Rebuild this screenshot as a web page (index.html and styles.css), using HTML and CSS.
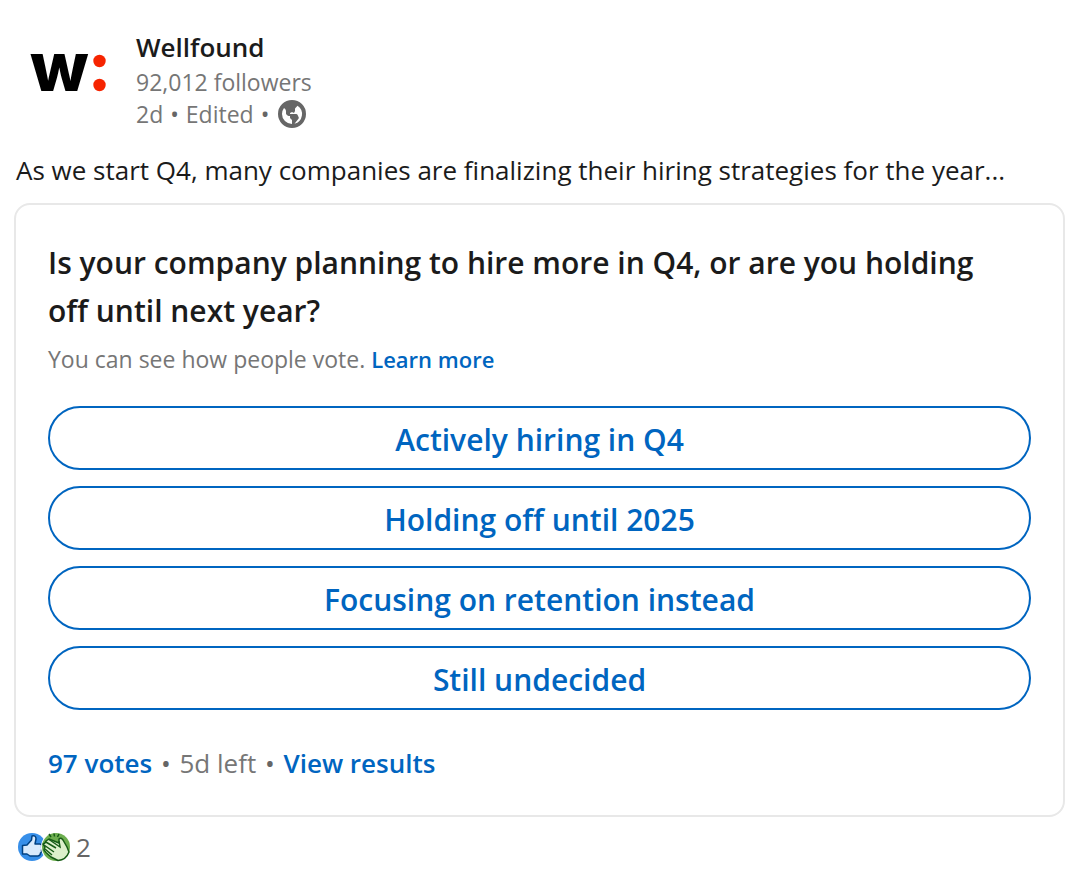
FILE: index.html
```html
<!DOCTYPE html>
<html lang="en">
<head>
<meta charset="utf-8">
<meta name="viewport" content="width=device-width, initial-scale=1">
<title>Wellfound poll</title>
<link rel="stylesheet" href="styles.css">
</head>
<body>
<article class="post">
  <header class="author">
    <svg class="logo" viewBox="0 0 96 96" role="img" aria-label="Wellfound logo">
      <text class="logo-letter" x="14" y="67">w</text>
      <circle cx="83.500" cy="37" r="6.200" fill="#f62400"/>
      <circle cx="83.500" cy="61" r="6.200" fill="#f62400"/>
    </svg>
    <div class="author-info">
      <h1 class="name">Wellfound</h1>
      <p class="meta">92,012 followers</p>
      <p class="meta meta-row"><span>2d <span class="dot">•</span> Edited <span class="dot">•</span></span>
        <svg class="globe" viewBox="1 1 14 14" aria-hidden="true">
          <path fill="#666" d="M8 1a7 7 0 107 7 7 7 0 00-7-7zM3 8a5 5 0 011-3l.55.55A1.5 1.5 0 015 6.620v1.070a.75.75 0 00.22.53l.56.56a.75.75 0 00.53.22H7v.69a.75.75 0 00.22.53l.56.56a.75.75 0 01.22.53V13a5 5 0 01-5-5zm6.240 4.830l2-2.460a.75.75 0 00.09-.8l-.58-1.160A.76.76 0 0010 8H7v-.19a.51.51 0 01.28-.45l.38-.19a.74.74 0 01.68 0L9 7.500l.38-.7a1 1 0 00.12-.48v-.85a.78.78 0 01.21-.53l1.070-1.090a5 5 0 01-1.540 9z"/>
        </svg>
      </p>
    </div>
  </header>
  <p class="body-text">As we start Q4, many companies are finalizing their hiring strategies for the year...</p>
  <section class="poll">
    <h2 class="question">Is your company planning to hire more in Q4, or are you holding off until next year?</h2>
    <p class="hint">You can see how people vote. <a href="#learn">Learn more</a></p>
    <div class="options">
      <button class="option" type="button">Actively hiring in Q4</button>
      <button class="option" type="button">Holding off until 2025</button>
      <button class="option" type="button">Focusing on retention instead</button>
      <button class="option" type="button">Still undecided</button>
    </div>
    <p class="stats"><a href="#votes">97 votes</a> <span class="dot">•</span> 5d left <span class="dot">•</span> <a href="#results">View results</a></p>
  </section>
  <footer class="reactions">
    <svg class="reaction-icons" viewBox="0 0 54 30" aria-hidden="true">
      <circle cx="15" cy="15" r="14" fill="#378fe9"/>
      <path d="M5.500 13.500L10 13L14.500 8L15 4Q19 3 19 7L18 12H23Q26 13 24.500 15Q26.500 17 24.500 18Q25 20.500 23.500 21Q23.500 23.500 21 24H13L10 22H5.500Z" fill="#d8eafc" stroke="#004182" stroke-width="1.500" stroke-linejoin="round"/>
      <circle cx="39" cy="15" r="15" fill="#fff"/>
      <circle cx="39" cy="15" r="14" fill="#6dae4f"/>
      <path d="M34 5L32 2M37.500 4.500L37 1.500M40.500 5L42 2" stroke="#165b16" stroke-width="1.500"/>
      <path d="M29 9L32 7L42 11V7Q44 5 46 8L50 15L52 20Q49 28 41 28.500L34 25L29 20.500L27 18L28 15L26 12L28 11Z" fill="#dcf0cb" stroke="#165b16" stroke-width="1.500" stroke-linejoin="round"/>
      <path d="M28 9.500L39 16M27 13L37 20M28 17L35 23M32 7.500L43 15L42 9" fill="none" stroke="#165b16" stroke-width="1.500"/>
    </svg>
    <span>2</span>
  </footer>
</article>
</body>
</html>
```
FILE: styles.css
```css
* { box-sizing: border-box; }
body {
  margin: 0;
  background: #fff;
  color: #1b1b1b;
  font-family: "Segoe UI", "Open Sans", "Noto Sans", sans-serif;
}
h1, h2, p { margin: 0; }
a { color: #0065c0; font-weight: 600; text-decoration: none; }
.post { padding: 24px 21px 8px 14px; }
.author { display: flex; gap: 24px; padding-left: 2px; }
.logo { flex: none; width: 96px; height: 96px; }
.author-info { padding-top: 4px; }
.logo-letter { font: 800 68px Inter, sans-serif; fill: #000; }
.name { font-size: 26px; line-height: 38px; font-weight: 600; }
.meta { font-size: 23px; line-height: 32px; color: #767676; }
.meta-row { display: flex; align-items: center; gap: 8px; }
.meta .dot { margin: 0 1px; }
.globe { width: 28px; height: 28px; }
.body-text { padding: 20px 2px 13px; font-size: 26px; line-height: 40px; }
.poll { border: 2px solid #e8e8e8; border-radius: 16px; padding: 34px 32px 32px; }
.question { padding-right: 24px; font-size: 30px; line-height: 48px; font-weight: 600; }
.hint { font-size: 23px; line-height: 32px; padding-top: 8px; color: #767676; }
.hint a { font-size: 22px; }
.options { display: flex; flex-direction: column; gap: 16px; margin: 31px 0 33px; }
.option {
  height: 64px;
  padding: 2px 24px 0;
  border: 2px solid #0065c0;
  border-radius: 32px;
  background: #fff;
  color: #0065c0;
  font: inherit;
  font-size: 30px;
  font-weight: 600;
}
.stats { font-size: 26px; line-height: 40px; color: #767676; }
.dot { color: #666; }
.stats .dot { margin: 0 2px; }
.reactions { display: flex; align-items: center; gap: 5px; padding: 13px 3px; font-size: 26px; line-height: 34px; color: #666; }
.reaction-icons { width: 54px; height: 30px; }
```
